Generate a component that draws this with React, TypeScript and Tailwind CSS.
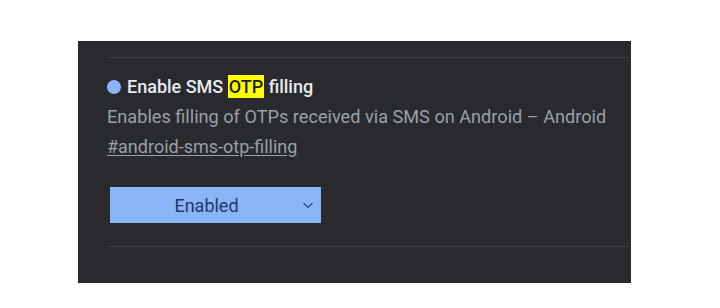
import React from "react";

export default function App() {
  return (
    <div className="w-[720px] h-[308px] bg-white pt-[41px] pl-[78px]" style={{ fontFamily: "Roboto, 'Liberation Sans', sans-serif" }}>
      <div className="w-[553px] h-[242px] bg-[#292a2d] pt-[16px] pl-[29px] pr-[2px] flex flex-col">
        <div className="h-[1px] bg-[#3c3d41]" />
        <div className="flex items-center mt-[17px] h-[24px]">
          <span className="w-[14px] h-[14px] rounded-full bg-[#8ab4f8] mr-[6px]" />
          <span className="text-[18px] font-medium text-[#e8eaed] leading-[24px]">
            Enable SMS <span className="bg-[#ffff00] text-[#202124] px-[1px] py-[1px]">OTP</span> filling
          </span>
        </div>
        <div className="text-[18.15px] text-[#9aa0a6] leading-[24px] mt-[6px] whitespace-nowrap">
          Enables filling of OTPs received via SMS on Android – Android
        </div>
        <div className="text-[18px] text-[#9aa0a6] leading-[24px] mt-[6px] underline underline-offset-2">
          #android-sms-otp-filling
        </div>
        <div className="mt-[28px] ml-[3px] w-[211px] h-[36px] bg-[#8ab4f8] flex items-center relative">
          <span className="flex-1 text-center text-[18px] text-[#1f3a68] pr-[18px]">Enabled</span>
          <svg className="absolute right-[7px] top-[13px]" width="12" height="10" viewBox="0 0 12 10" fill="none">
            <path d="M1.5 3 L6 7.5 L10.5 3" stroke="#2a4577" strokeWidth="1.2" />
          </svg>
        </div>
        <div className="h-[1px] bg-[#3c3d41] mt-[23px]" />
      </div>
    </div>
  );
}
